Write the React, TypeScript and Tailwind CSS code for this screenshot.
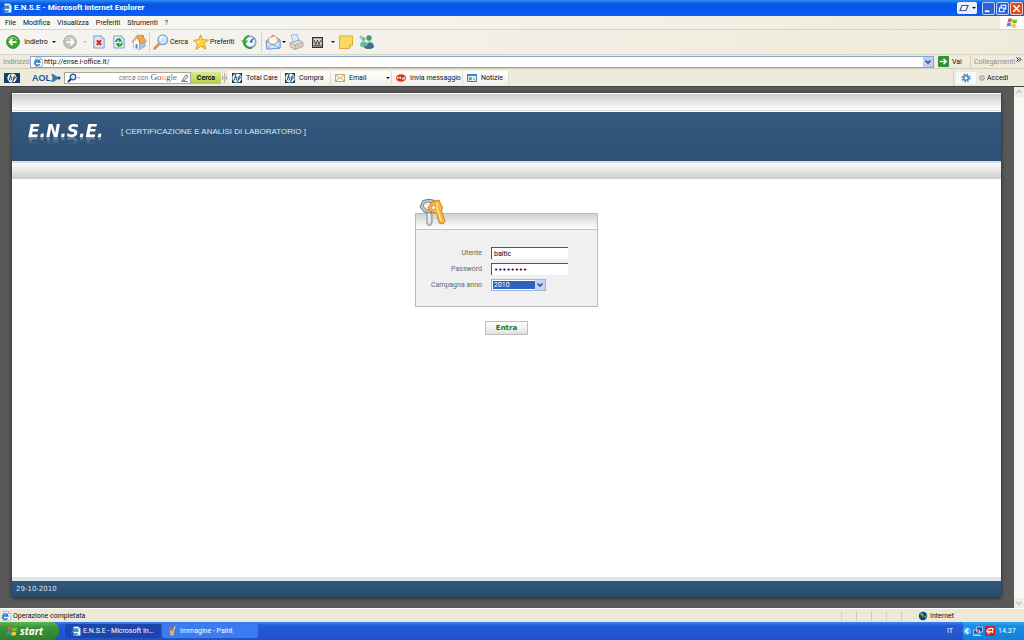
import type { ReactNode } from "react"

const UI = "font-['Roboto','Liberation_Sans',sans-serif]"

function IePage({ className = "size-3" }: { className?: string }) {
  return (
    <svg viewBox="0 0 16 16" className={`${className} shrink-0`} aria-hidden="true">
      <path d="M4 1h8l3 3v11H4z" fill="#fff" stroke="#7d9cc4" />
      <path d="M12 1v3h3" fill="#c9dcf2" stroke="#7d9cc4" strokeWidth=".8" />
      <path d="M10.500 11.500A4.200 4.200 0 1 1 11 8H3" fill="none" stroke="#2377cf" strokeWidth="2.400" />
      <path d="M1 12C1 9 7 3 12 4" fill="none" stroke="#5cb0ee" />
    </svg>
  )
}

function RoundArrow({ forward = false }: { forward?: boolean }) {
  return (
    <svg viewBox="0 0 16 16" className="size-3.5 shrink-0" aria-hidden="true">
      <circle cx="8" cy="8" r="7.300" fill={forward ? "#c3c3c0" : "#3fa72f"} stroke={forward ? "#a5a5a2" : "#268020"} />
      <path d="M3 5.500Q8-.5 13 5.500" fill="none" stroke="#fff" strokeOpacity=".4" strokeWidth="1.500" />
      <path
        d={forward ? "M4 8h8M8.500 4.500 12 8l-3.500 3.500" : "M12 8H4M7.500 4.500 4 8l3.500 3.500"}
        fill="none"
        stroke="#fff"
        strokeWidth="2"
      />
    </svg>
  )
}

function StopIcon() {
  return (
    <svg viewBox="0 0 14 16" className="h-3.5 w-3 shrink-0" aria-hidden="true">
      <path d="M1 1h9l3 3v11H1z" fill="#dce9fb" stroke="#6f8fc6" />
      <path d="M10 1v3h3" fill="#fff" stroke="#6f8fc6" strokeWidth=".8" />
      <path d="M4.500 6l5 5.500M9.500 6l-5 5.500" stroke="#e02a1c" strokeWidth="2.400" />
    </svg>
  )
}

function RefreshIcon() {
  return (
    <svg viewBox="0 0 14 16" className="h-3.5 w-3 shrink-0" aria-hidden="true">
      <path d="M1 1h9l3 3v11H1z" fill="#e3f0fb" stroke="#6f8fc6" />
      <path d="M10 1v3h3" fill="#fff" stroke="#6f8fc6" strokeWidth=".8" />
      <path d="M3.500 8c0-3 3-4 5-2.500M10.500 9c0 3-3 4-5 2.500" fill="none" stroke="#219a2c" strokeWidth="2" />
      <path d="M7 3l4 4-4.500 1zM7 14l-4-4 4.500-1z" fill="#219a2c" />
    </svg>
  )
}

function HomeIcon() {
  return (
    <svg viewBox="0 0 16 16" className="size-4 shrink-0" aria-hidden="true">
      <path d="M11 1.500h2V6h-2z" fill="#c9583a" />
      <path d="M2.500 8v5.500l6 2V7.500L6 4z" fill="#fbfcff" stroke="#9db0d2" strokeWidth=".7" />
      <path d="M8.500 8.500v7l5.500-3V8z" fill="#a9c3ea" stroke="#7f9bcb" strokeWidth=".7" />
      <path d="M6 1.500 11 1l4.500 6.500-6.500 2z" fill="#f5a650" stroke="#d98634" strokeWidth=".7" />
      <path d="M.8 8.500 6 1.800l3 7" fill="none" stroke="#e8923c" strokeWidth="1.200" />
      <path d="M4.500 10h2v4.500l-2-.7z" fill="#5f86c8" />
    </svg>
  )
}

function SearchIcon() {
  return (
    <svg viewBox="0 0 16 16" className="size-4 shrink-0" aria-hidden="true">
      <path d="M6.500 9.500 1.500 14.500" stroke="#cf9552" strokeWidth="2.600" strokeLinecap="round" />
      <circle cx="9.800" cy="5.800" r="4.800" fill="#cfe7fb" stroke="#7da9dd" strokeWidth="1.400" />
      <path d="M7 5a3 3 0 0 1 3-2.500" fill="none" stroke="#fff" strokeWidth="1.400" />
    </svg>
  )
}

function StarIcon() {
  return (
    <svg viewBox="0 0 16 16" className="size-4 shrink-0" aria-hidden="true">
      <path
        d="M7.500.8 9.800 5.700l5.700.3-4.300 3.600 1.700 5.600-5-3-4.900 3.300 1.400-5.800L.5 6.300l5.300-.6z"
        fill="#fbd34c"
        stroke="#d99a1e"
        strokeWidth=".9"
      />
      <path d="M7.500 3.500 6.500 7l-3.500.5 3 2" fill="#fff1a8" />
    </svg>
  )
}

function HistoryIcon() {
  return (
    <svg viewBox="0 0 16 16" className="size-4 shrink-0" aria-hidden="true">
      <circle cx="9" cy="8" r="5.800" fill="#e9f4fb" stroke="#8aa3c6" strokeWidth="1.600" />
      <path d="M9 8l3.500-3.500M9 8h3" stroke="#3a5f94" strokeWidth="1.200" />
      <path d="M11 13.500A6 6 0 0 1 3 7.500Q3.500 3 8 2" fill="none" stroke="#2f9a3c" strokeWidth="2" />
      <path d="M0 6.500h7L4 11z" fill="#37a545" />
    </svg>
  )
}

function MailIcon() {
  return (
    <svg viewBox="0 0 16 16" className="size-4 shrink-0" aria-hidden="true">
      <path d="M1 7 8 1l7 5v8L2 15z" fill="#a9cbf2" stroke="#6a92cd" strokeWidth=".9" />
      <path d="M4 3.500 11 2l2 6-5 3-4.500-2z" fill="#fff6e4" stroke="#e0a46a" strokeWidth=".8" />
      <path d="M1.500 7.500 8 11l7-4.500V14L2 15z" fill="#d5e7fb" stroke="#6a92cd" strokeWidth=".8" />
      <path d="M2 15l5-5 8 4" fill="none" stroke="#6a92cd" strokeWidth=".8" />
    </svg>
  )
}

function PrinterIcon() {
  return (
    <svg viewBox="0 0 16 16" className="size-4 shrink-0" aria-hidden="true">
      <path d="M3 1 9 .5 11.500 7l-6 1.500z" fill="#dbe9ff" stroke="#8aa8dd" strokeWidth=".8" />
      <path d="M2 9l9-3 4 2.500v4L7 15.500l-5-3z" fill="#dcdcdc" stroke="#a1a2a6" strokeWidth=".9" />
      <path d="M2 9l5 2.500 8-3M7 11.500v4" fill="none" stroke="#999a9e" strokeWidth=".8" />
      <path d="M9 12.800l4-1.500" stroke="#e8bf49" strokeWidth="1.400" />
    </svg>
  )
}

function PeopleIcon() {
  return (
    <svg viewBox="0 0 16 16" className="size-4 shrink-0" aria-hidden="true">
      <circle cx="4.500" cy="5" r="2" fill="#6cc08a" />
      <path d="M1 12c0-6 6-6 7-1l-2 3z" fill="#6cb9a0" />
      <circle cx="10" cy="4" r="2.700" fill="#3f9c76" />
      <path d="M5.500 14c0-8 9-9 9.500-1-2 2.500-7 2.500-9.500 1z" fill="#39708f" />
      <path d="M7 12c1-4 4-5 6-3" fill="none" stroke="#a4d5da" strokeWidth="1.200" />
      <path d="M2 1.500v3M.5 3h3" stroke="#76a9d8" />
    </svg>
  )
}

function HpLogo({ className }: { className: string }) {
  return (
    <svg viewBox="0 0 16 10" preserveAspectRatio="xMidYMid slice" className={`${className} shrink-0`} aria-hidden="true">
      <rect width="16" height="10" fill="#153f63" />
      <circle cx="8" cy="5" r="4.600" fill="#fff" />
      <path d="M7.300.4 5 7.500M5.900 4.500c2-1.200 2.200-.2 1.800 1L7 7.500M10.300 3 8.500 9.600M9.800 3.300c2.600-.7 1.400 3.600-.9 3.500" fill="none" stroke="#153f63" />
    </svg>
  )
}

function Caret({ faint = false }: { faint?: boolean }) {
  return (
    <svg viewBox="0 0 4 2" className="h-0.5 w-1 shrink-0" aria-hidden="true">
      <path d="M0 0h4L2 2z" fill={faint ? "#bbb9ad" : "#111"} />
    </svg>
  )
}

function Chevron() {
  return (
    <svg viewBox="0 0 8 8" className="size-2" aria-hidden="true">
      <path d="M1.500 2.500 4 5l2.500-2.500" fill="none" stroke="#33508f" strokeWidth="1.600" />
    </svg>
  )
}

function Flag({ className }: { className: string }) {
  return (
    <svg viewBox="0 0 16 16" className={`${className} shrink-0`} aria-hidden="true">
      <path d="M3 2.500Q6 .8 8 2.500L7 7Q4.500 5.500 2 7z" fill="#ee5a2a" />
      <path d="M9 3q2.500 1.500 6 .2L14 8q-3 1.300-6-.4z" fill="#7dbb35" />
      <path d="M1.800 8Q4.500 6.500 6.800 8l-1 4.800Q3.500 11.300.8 12.800z" fill="#3f87e6" />
      <path d="M7.800 8.600q2.800 1.600 6 .4l-1 4.700q-3 1.300-6-.4z" fill="#fcc62e" />
    </svg>
  )
}

function ToolButton({ width, label, children }: { width: string; label: string; children: ReactNode }) {
  return (
    <button type="button" aria-label={label} className={`flex h-5 shrink-0 items-center gap-px whitespace-nowrap ${width}`}>
      {children}
    </button>
  )
}

function TitleBar() {
  const control = "size-[13px] rounded-xs border border-white/70"
  return (
    <header className="flex h-4 shrink-0 items-center bg-linear-to-b from-[#2f8cf5] via-[#0555e0] via-25% to-[#0a5ef8] pl-0.5">
      <IePage className="size-2.5" />
      <h1 className="ml-0.5 text-[8px] leading-4 font-bold whitespace-nowrap text-white">
        E.N.S.E - Microsoft Internet Explorer
      </h1>
      <div className="ml-auto flex items-center gap-px pr-px">
        <button
          type="button"
          aria-label="Tastiera"
          className="mr-1 flex h-3 w-5 items-center justify-around rounded-xs bg-[#eef1f7]"
        >
          <svg viewBox="0 0 10 8" className="h-2 w-2.5" aria-hidden="true">
            <path d="M3 1.500h6l-2 5H1z" fill="#fff" stroke="#3d5690" strokeWidth="1.200" />
          </svg>
          <Caret />
        </button>
        <button type="button" aria-label="Riduci a icona" className={`${control} bg-[#2a62dd]`}>
          <svg viewBox="0 0 12 12" aria-hidden="true">
            <path d="M2 9h5" stroke="#fff" strokeWidth="2" />
          </svg>
        </button>
        <button type="button" aria-label="Ripristina" className={`${control} bg-[#2a62dd]`}>
          <svg viewBox="0 0 12 12" aria-hidden="true">
            <path d="M4.500 5V2.500h5v4H8M2.500 5.500h5v4h-5z" fill="none" stroke="#fff" strokeWidth="1.200" />
          </svg>
        </button>
        <button type="button" aria-label="Chiudi" className={`${control} bg-[#dd4a22]`}>
          <svg viewBox="0 0 12 12" aria-hidden="true">
            <path d="M2.500 2.500l7 7M9.500 2.500l-7 7" stroke="#fff" strokeWidth="1.700" />
          </svg>
        </button>
      </div>
    </header>
  )
}

function MenuBar() {
  return (
    <nav className="flex h-3.5 shrink-0 items-stretch border-b border-[#d8d5c5] bg-linear-to-r from-[#f8f7f4] to-[#efebdc]">
      <div className="flex items-center gap-[7px] pl-[5px]">
        {["File", "Modifica", "Visualizza", "Preferiti", "Strumenti", "?"].map((item) => (
          <button key={item} type="button">
            {item}
          </button>
        ))}
      </div>
      <div className="ml-auto flex w-6 items-center justify-center bg-white">
        <Flag className="size-3" />
      </div>
    </nav>
  )
}

function ToolBar() {
  return (
    <div className="flex h-[25px] shrink-0 items-center border-b border-[#d8d5c5] bg-linear-to-r from-[#f5f4f1] to-[#efebda] pl-1.5">
      <ToolButton width="w-[57px]" label="Indietro">
        <RoundArrow />
        <span className="w-[30px]">Indietro</span>
        <Caret />
      </ToolButton>
      <ToolButton width="w-[30px]" label="Avanti">
        <RoundArrow forward />
        <span className="w-1" />
        <Caret faint />
      </ToolButton>
      <ToolButton width="w-5" label="Termina">
        <StopIcon />
      </ToolButton>
      <ToolButton width="w-[18px]" label="Aggiorna">
        <RefreshIcon />
      </ToolButton>
      <ToolButton width="w-[18px]" label="Pagina iniziale">
        <HomeIcon />
      </ToolButton>
      <div className="mr-[3px] h-5 w-px bg-[#d5d2c2]" />
      <ToolButton width="w-10" label="Cerca">
        <SearchIcon />
        Cerca
      </ToolButton>
      <ToolButton width="w-12" label="Preferiti">
        <StarIcon />
        Preferiti
      </ToolButton>
      <ToolButton width="w-5" label="Cronologia">
        <HistoryIcon />
      </ToolButton>
      <div className="mr-[3px] h-5 w-px bg-[#d5d2c2]" />
      <ToolButton width="w-[23px]" label="Posta">
        <MailIcon />
        <Caret />
      </ToolButton>
      <ToolButton width="w-6" label="Stampa">
        <PrinterIcon />
      </ToolButton>
      <ToolButton width="w-[27px]" label="Modifica con Word">
        <svg viewBox="0 0 12 12" className="size-[11px]" aria-hidden="true">
          <rect x=".7" y=".7" width="10.600" height="10.600" fill="#d9d9d9" stroke="#333" strokeWidth="1.400" />
          <path d="M2.500 3.500 4 8.500l2-5 1.500 5 2-5M2 9.500h8" fill="none" stroke="#333" />
        </svg>
        <span className="w-1.5" />
        <Caret />
      </ToolButton>
      <ToolButton width="w-5" label="Discussione">
        <svg viewBox="0 0 14 14" className="size-3.5" aria-hidden="true">
          <path d="M.5 1h13v9l-3 3.500H.5z" fill="#fcd95f" stroke="#dfae3a" />
          <path d="M13.500 10h-3v3.500" fill="#fff0b0" stroke="#dfae3a" />
        </svg>
      </ToolButton>
      <ToolButton width="w-4" label="Messenger">
        <PeopleIcon />
      </ToolButton>
    </div>
  )
}

function AddressBar() {
  return (
    <form className="flex h-3.5 shrink-0 items-center border-b border-[#d0cdbd] bg-[#efecdf] pl-[3px]" onSubmit={(e) => e.preventDefault()}>
      <label htmlFor="address" className="w-[27px] shrink-0 text-[#8b8a84]">
        Indirizzo
      </label>
      <div className="flex h-3 flex-1 items-center border border-[#8ba5c9] bg-white pl-0.5">
        <IePage className="size-2.5" />
        <input id="address" type="text" defaultValue="http://ense.i-office.it/" className="h-2.5 min-w-0 flex-1 pl-px outline-none" />
        <button type="button" aria-label="Mostra indirizzi" className="flex h-full w-2.5 items-center justify-center bg-[#b9cdf7]">
          <Chevron />
        </button>
      </div>
      <button type="submit" className="ml-1 flex w-8 items-center gap-[3px]">
        <svg viewBox="0 0 12 12" className="size-[11px]" aria-hidden="true">
          <rect width="12" height="12" rx="1" fill="#2f9233" />
          <path d="M2 6h7M6 3l3 3-3 3" fill="none" stroke="#fff" strokeWidth="1.400" />
        </svg>
        Vai
      </button>
      <div className="flex h-3 w-[54px] items-center border-l border-[#d5d2c2] pl-[3px]">
        <span className="text-[#8b8a84]">Collegamenti</span>
        <button type="button" aria-label="Altri collegamenti" className="mb-1 ml-auto pr-0.5">
          <svg viewBox="0 0 6 5" className="h-[5px] w-1.5" aria-hidden="true">
            <path d="M.5.5l2 2-2 2M3 .5l2 2-2 2" fill="none" stroke="#111" />
          </svg>
        </button>
      </div>
    </form>
  )
}

function BarLink({ width, icon, children }: { width: string; icon: ReactNode; children: ReactNode }) {
  return (
    <button
      type="button"
      className={`flex h-3.5 shrink-0 items-center gap-1 border-r border-[#dedbd0] bg-linear-to-b from-white to-[#f1efe8] pl-1 whitespace-nowrap ${width}`}
    >
      {icon}
      {children}
    </button>
  )
}

function SearchBar() {
  return (
    <form className="flex h-[17px] shrink-0 items-center bg-[#eeebdc] pl-1" onSubmit={(e) => e.preventDefault()}>
      <HpLogo className="h-2.5 w-4" />
      <button
        type="button"
        className="ml-3 flex w-8 items-center font-['Liberation_Sans',sans-serif] text-[9px] font-bold text-[#1c5790]"
      >
        AOL
        <svg viewBox="0 0 10 8" className="h-2 w-2.5" aria-hidden="true">
          <path d="M0 0q5 0 6 4-1 4-6 4 3-4 0-8zM5 2l4 2-4 2z" fill="#2f7ba8" />
          <circle cx="8" cy="4" r="1.500" fill="#174f7b" />
        </svg>
      </button>
      <div className="flex h-3 w-[127px] items-center border border-[#a9a99f] bg-white pl-0.5">
        <svg viewBox="0 0 10 10" className="size-2.5 shrink-0" aria-hidden="true">
          <path d="M4 6 1 9" stroke="#173c70" strokeWidth="2" />
          <circle cx="6" cy="4" r="2.800" fill="#d4e9fb" stroke="#28589c" strokeWidth="1.300" />
        </svg>
        <Caret faint />
        <input type="search" aria-label="cerca con Google" className="h-2.5 min-w-0 flex-1 outline-none" />
        <span className="whitespace-nowrap text-[#777] italic">cerca con</span>
        <span className="ml-0.5 font-['Liberation_Serif',serif] text-[9px] leading-none">
          <span className="text-[#2b5fc7]">G</span>
          <span className="text-[#d33a2c]">o</span>
          <span className="text-[#e2a520]">o</span>
          <span className="text-[#2b5fc7]">g</span>
          <span className="text-[#3b9a43]">l</span>
          <span className="text-[#d33a2c]">e</span>
        </span>
        <svg viewBox="0 0 8 8" className="mr-px ml-1 size-2 shrink-0" aria-hidden="true">
          <path d="M1 6.500 5 1l2 1.500-4 4.500zM.5 7.500h6" fill="#eee" stroke="#777" />
        </svg>
      </div>
      <button type="submit" className="h-3 w-[30px] shrink-0 bg-linear-to-b from-[#dcea8d] to-[#b1cd45] font-bold">
        Cerca
      </button>
      <svg viewBox="0 0 5 10" className="mx-px h-2.5 w-[5px] shrink-0" aria-hidden="true">
        <path d="M2.500 0v10M.5 3v4M4.500 3v4M0 5h5" stroke="#a7a498" strokeWidth=".8" />
      </svg>
      <BarLink width="w-[53px]" icon={<HpLogo className="size-2.5" />}>
        Total Care
      </BarLink>
      <BarLink width="w-[50px]" icon={<HpLogo className="size-2.5" />}>
        Compra
      </BarLink>
      <BarLink
        width="w-[61px]"
        icon={
          <svg viewBox="0 0 10 8" className="h-2 w-2.5 shrink-0" aria-hidden="true">
            <path d="M.5.5h9v7h-9zl4.500 4 4.500-4M.5 7.500 4 4M9.500 7.500 6 4" fill="#fff8df" stroke="#b59b5e" strokeWidth=".8" />
          </svg>
        }
      >
        Email
        <span className="ml-auto pr-px">
          <Caret />
        </span>
      </BarLink>
      <BarLink
        width="w-[71px]"
        icon={
          <svg viewBox="0 0 10 8" className="h-2 w-2.5 shrink-0" aria-hidden="true">
            <ellipse cx="5" cy="4" rx="5" ry="3.800" fill="#e2331f" />
            <path d="M1.500 5V3l1.500 1 1.500-1v2M6 5l2-2 1 2z" fill="none" stroke="#fff" strokeWidth=".8" />
          </svg>
        }
      >
        Invia messaggio
      </BarLink>
      <BarLink
        width="w-[46px]"
        icon={
          <svg viewBox="0 0 10 8" className="h-2 w-2.5 shrink-0" aria-hidden="true">
            <path d="M.5.5h9v7h-9z" fill="#e8f3fd" stroke="#4b86b8" />
            <path d="M0 1h10" stroke="#3f82bf" strokeWidth="2" />
            <path d="M2 3.500h2.500v2.500H2zM6 4h2.500M6 5.500h2.500" fill="#6fae6d" stroke="#6a9cc5" strokeWidth=".6" />
          </svg>
        }
      >
        Notizie
      </BarLink>
      <div className="ml-auto flex h-full w-[71px] items-center border-l border-[#d5d2c2] pl-0.5">
        <button type="button" aria-label="Impostazioni" className="flex h-3 w-5 items-center justify-center bg-[#f8fafc]">
          <svg viewBox="0 0 10 10" className="size-2.5" aria-hidden="true">
            <circle cx="5" cy="5" r="3.800" fill="none" stroke="#4d85be" strokeWidth="1.600" strokeDasharray="1.600 1.385" />
            <circle cx="5" cy="5" r="2.300" fill="#f8fafc" stroke="#4d85be" strokeWidth="1.500" />
          </svg>
        </button>
        <button type="button" className="ml-[3px] flex items-center gap-0.5">
          <svg viewBox="0 0 6 6" className="size-1.5" aria-hidden="true">
            <circle cx="3" cy="3" r="2.300" fill="#d6d6d6" stroke="#929292" />
          </svg>
          Accedi
        </button>
      </div>
    </form>
  )
}

function Keys() {
  return (
    <svg viewBox="0 0 28 30" className="absolute -top-4 left-0.5 h-[30px] w-7" aria-hidden="true">
      <path d="M9 13l5 3v9l-2 3-3-2z" fill="#d3d6d9" stroke="#858a90" />
      <path d="M5 2.500Q11 0 17 2.500l2 5.500-2 6q-6 2-11 0L2 9z" fill="#c2c7cb" stroke="#737b83" />
      <path d="M6.500 5q4-2 8 0l1 3-2 4q-4 1-6-1L5 8z" fill="#f4f6f7" stroke="#7e868d" />
      <path d="M11 15v10" stroke="#f8f8f8" strokeWidth="1.200" />
      <path
        d="M14 4l7-2 2 5 1.500 2-1 4 3.500 10-2 3-4-1v-3l-2-2 1-2-2-3-5-1-3-4 3-5z"
        fill="#f8b63e"
        stroke="#c98025"
      />
      <path d="M14 8l3-1 1 3-3 2-2-2z" fill="#fff4da" stroke="#c98425" strokeWidth=".8" />
      <path d="M19 5v5l4 13" fill="none" stroke="#ffe49a" strokeWidth="1.500" />
    </svg>
  )
}

function LoginForm() {
  const field = "h-3 w-[77px] border-t border-l border-[#555] bg-white pl-0.5 text-black outline-none"
  return (
    <form className="mx-auto flex w-[183px] flex-col items-center" onSubmit={(e) => e.preventDefault()}>
      <div className="relative w-full border border-[#b9b9b9] bg-[#f0f0f0]">
        <Keys />
        <div className="h-4 border-b border-[#c4c4c4] bg-linear-to-b from-[#d2d2d2] to-white" />
        <div className="grid grid-cols-[66px_1fr] items-center gap-x-[9px] gap-y-1 pt-[17px] pb-[15px] text-[#666]">
          <label htmlFor="user" className="text-right">
            Utente
          </label>
          <input id="user" type="text" defaultValue="baltic" className={field} />
          <label htmlFor="password" className="text-right">
            Password
          </label>
          <input
            id="password"
            type="password"
            defaultValue="password"
            className={`${field} font-['DejaVu_Sans',sans-serif]`}
          />
          <label htmlFor="year" className="text-right whitespace-nowrap">
            Campagna anno
          </label>
          <div className="relative h-3 w-[55px] border border-[#9db4d8] bg-white p-px">
            <select
              id="year"
              defaultValue="2010"
              className="block h-2 w-[42px] appearance-none bg-[#2f62bd] pl-px leading-2 text-white outline-none"
            >
              <option>2010</option>
              <option>2009</option>
            </select>
            <span className="pointer-events-none absolute inset-y-0 right-0 flex w-2.5 items-center justify-center bg-[#c3d3f8]">
              <Chevron />
            </span>
          </div>
        </div>
      </div>
      <button
        type="submit"
        className="mt-3.5 h-3.5 w-[43px] border border-[#bdbdbd] bg-linear-to-b from-white to-[#e2e2e2] font-['DejaVu_Sans',sans-serif] font-bold text-[#0b7d0b]"
      >
        Entra
      </button>
    </form>
  )
}

function WebPage() {
  return (
    <div className="flex min-h-0 flex-1 border-t border-[#444] bg-[#595959]">
      <div className="flex min-w-0 flex-1 flex-col pt-1.5 pr-[13px] pb-[11px] pl-3">
        <main className="flex flex-1 flex-col bg-white shadow-[0_1px_4px_#222]">
          <div className="mt-px h-[17px] border-b border-[#ddd] bg-linear-to-b from-[#cdcdcd] to-white" />
          <div className="mt-px flex h-[49px] items-start bg-linear-to-b from-[#355a7c] to-[#2c5076] pt-2.5 pl-4">
            <div className="w-[93px] font-['DejaVu_Sans',sans-serif] text-[17px] leading-[18px] font-bold text-white italic [-webkit-box-reflect:below_-6px_linear-gradient(transparent_40%,rgb(0_0_0/0.4))]">
              E.N.S.E.
            </div>
            <p className="font-['Liberation_Sans',sans-serif] text-[8px] leading-5 text-[#dce8f3]">
              [ CERTIFICAZIONE E ANALISI DI LABORATORIO ]
            </p>
          </div>
          <div className="mb-[34px] h-[18px] border-t-2 border-[#dadde2] bg-linear-to-b from-white to-[#cbcbcb]" />
          <LoginForm />
          <footer className="mt-auto border-t-4 border-[#dde5eb] bg-linear-to-b from-[#30587b] to-[#294b6f] pl-1 font-['DejaVu_Sans',sans-serif] text-[7px] leading-4 text-[#dce8f3]">
            29-10-2010
          </footer>
        </main>
      </div>
      <div className="flex w-2.5 flex-col justify-between bg-[#f7f7f4]">
        <button type="button" aria-label="Scorri in alto" className="flex h-2.5 items-center justify-center bg-[#eeeee8]">
          <svg viewBox="0 0 8 8" className="size-2" aria-hidden="true">
            <path d="M1.500 5 4 2.500 6.500 5" fill="none" stroke="#c5c5bd" strokeWidth="1.500" />
          </svg>
        </button>
        <button type="button" aria-label="Scorri in basso" className="flex h-2.5 items-center justify-center bg-[#eeeee8]">
          <svg viewBox="0 0 8 8" className="size-2" aria-hidden="true">
            <path d="M1.500 3 4 5.500 6.500 3" fill="none" stroke="#c5c5bd" strokeWidth="1.500" />
          </svg>
        </button>
      </div>
    </div>
  )
}

function StatusBar() {
  return (
    <div className="flex h-3.5 shrink-0 items-center border-t border-white bg-[#ece9d8] pl-px">
      <IePage className="size-2.5" />
      <span className="ml-0.5">Operazione completata</span>
      <div className="ml-auto flex h-2.5">
        {[1, 2, 3, 4, 5].map((i) => (
          <div key={i} className="w-[15px] border-l border-[#d3d0c0]" />
        ))}
      </div>
      <div className="flex w-[108px] items-center gap-0.5 pl-0.5">
        <svg viewBox="0 0 10 10" className="size-2.5" aria-hidden="true">
          <circle cx="5" cy="5" r="4.200" fill="#163d86" />
          <path d="M1.500 3q3-3 4 0t-1 3zM6 5l3-1-1 4z" fill="#55a840" />
        </svg>
        Internet
      </div>
    </div>
  )
}

function TaskBar() {
  const task = "flex h-3.5 w-24 items-center gap-0.5 rounded-xs pl-1.5 whitespace-nowrap"
  return (
    <footer className="flex h-[18px] shrink-0 items-center bg-linear-to-b from-[#3f82ee] via-[#245bdb] via-20% to-[#2152c8] text-white">
      <button
        type="button"
        className="mr-1.5 flex h-full w-[59px] items-center gap-0.5 rounded-r-lg bg-linear-to-b from-[#5eb65a] via-[#3a9439] via-30% to-[#2f8030] pl-1.5 font-['Open_Sans',sans-serif] text-[10px] leading-none font-bold italic"
      >
        <Flag className="size-3" />
        start
      </button>
      <button type="button" className={`${task} bg-[#1a46ae]`}>
        <IePage className="size-2.5" />
        E.N.S.E - Microsoft In...
      </button>
      <button type="button" className={`${task} ml-px bg-[#3b7cf2]`}>
        <svg viewBox="0 0 10 12" className="h-2.5 w-2 shrink-0" aria-hidden="true">
          <path d="M2 5h6L7 11.500H3z" fill="#d8b470" />
          <path d="M3 5 1 .5M5 5V0" stroke="#e25c2c" strokeWidth="1.500" />
          <path d="M7 5 9 .5" stroke="#f4dc5c" strokeWidth="1.500" />
        </svg>
        <span className="ml-0.5">Immagine - Paint</span>
      </button>
      <span className="ml-auto w-4">IT</span>
      <div className="flex h-full w-[61px] items-center gap-px bg-linear-to-b from-[#35a8f4] via-[#1590e6] via-20% to-[#1180d8]">
        <button type="button" aria-label="Mostra icone nascoste">
          <svg viewBox="0 0 10 10" className="size-2" aria-hidden="true">
            <circle cx="5" cy="5" r="4.800" fill="#55b4f4" />
            <path d="M6.500 2 3.500 5l3 3" fill="none" stroke="#fff" strokeWidth="1.800" />
          </svg>
        </button>
        <svg viewBox="0 0 12 10" className="h-2.5 w-3" aria-hidden="true">
          <path d="M4.500 1h6v5h-6zM1.500 4h6v4h-6z" fill="#343f7b" stroke="#aebfe2" />
          <path d="M1 9.500h8" stroke="#d1d8e8" />
        </svg>
        <svg viewBox="0 0 12 12" className="size-2.5" aria-hidden="true">
          <rect width="12" height="12" rx="1" fill="#d61f28" />
          <path d="M2 7.500Q3 2 9.500 3L9 7.500Q6 5.500 2 7.500M6.500 5.500 4 10" fill="none" stroke="#fff" strokeWidth="1.300" />
        </svg>
        <time className="ml-0.5">14.37</time>
      </div>
    </footer>
  )
}

export default function App() {
  return (
    <div className={`flex h-screen flex-col overflow-hidden text-[7px] leading-3 text-[#111] ${UI}`}>
      <TitleBar />
      <MenuBar />
      <ToolBar />
      <AddressBar />
      <SearchBar />
      <WebPage />
      <StatusBar />
      <TaskBar />
    </div>
  )
}
